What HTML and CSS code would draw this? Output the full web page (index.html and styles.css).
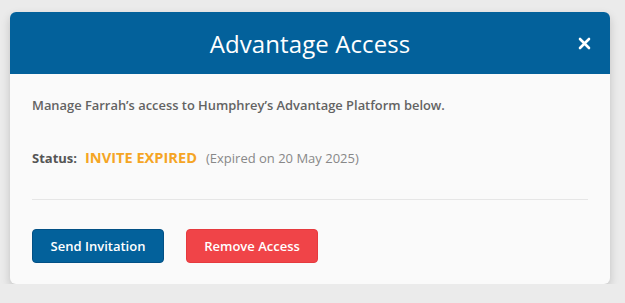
FILE: index.html
```html
<!DOCTYPE html>
<html lang="en">
<head>
    <meta charset="UTF-8">
    <meta name="viewport" content="width=device-width, initial-scale=1.0">
    <title>Advantage Access</title>
    <link rel="stylesheet" href="styles.css">
</head>
<body>
    <!-- Access modal -->
    <div class="modal">
        <div class="modal-header">
            <h1>Advantage Access</h1>
            <button class="close" aria-label="Close">
                <svg width="13" height="13" viewBox="0 0 13 13">
                    <path d="M2 2 L11 11 M11 2 L2 11" stroke="#fff" stroke-width="2.6" stroke-linecap="round"/>
                </svg>
            </button>
        </div>
        <div class="modal-body">
            <p class="intro">Manage Farrah’s access to Humphrey’s Advantage Platform below.</p>
            <p class="status">
                <span class="label">Status:</span>
                <span class="state">INVITE EXPIRED</span>
                <span class="note">(Expired on 20 May 2025)</span>
            </p>
            <hr>
            <div class="actions">
                <button class="btn btn-primary">Send Invitation</button>
                <button class="btn btn-danger">Remove Access</button>
            </div>
        </div>
    </div>
</body>
</html>
```

FILE: styles.css
```css
/* General body styling */
body {
    margin: 0;
    padding: 12px 15px 0 10px;
    background-color: #ebebeb;
    font-family: 'Open Sans', sans-serif;
}

/* Modal box */
.modal {
    width: 600px;
    border-radius: 6px;
    overflow: hidden;
    background: #fafafa;
    box-shadow: 0 4px 10px rgba(0, 0, 0, 0.18);
}

.modal-header {
    position: relative;
    height: 62px;
    display: flex;
    justify-content: center;
    align-items: center;
    background-color: #03619b;
}

.modal-header h1 {
    margin: 0;
    color: #fff;
    font-size: 24px;
    font-weight: 400;
    letter-spacing: 0.1px;
}

.close {
    position: absolute;
    right: 19px;
    top: 25px;
    padding: 0;
    border: none;
    background: none;
    line-height: 0;
    cursor: pointer;
}

.modal-body {
    padding: 22px 22px 21px 22px;
}

.intro {
    margin: 0;
    font-size: 12.9px;
    font-weight: 600;
    line-height: 18px;
    color: #636363;
}

.status {
    margin: 34px 0 0 0;
    display: flex;
    align-items: baseline;
    line-height: 18px;
    color: #555;
}

.status .label {
    font-size: 13px;
    font-weight: 700;
    margin-right: 8px;
}

.status .state {
    font-size: 14.6px;
    font-weight: 700;
    color: #f5a524;
    margin-right: 9px;
}

.status .note {
    font-size: 13px;
    color: #888;
}

hr {
    margin: 32px 0 0 0;
    border: none;
    border-top: 1px solid #e6e6e6;
}

.actions {
    display: flex;
    gap: 22px;
    margin-top: 29px;
}

.btn {
    width: 132px;
    height: 34px;
    border-radius: 4px;
    font-family: 'Open Sans', sans-serif;
    font-size: 13px;
    font-weight: 600;
    color: #fff;
    cursor: pointer;
}

.btn-primary {
    background-color: #03619b;
    border: 1px solid #025085;
}

.btn-danger {
    background-color: #f04448;
    border: 1px solid #e63a3e;
}
```
